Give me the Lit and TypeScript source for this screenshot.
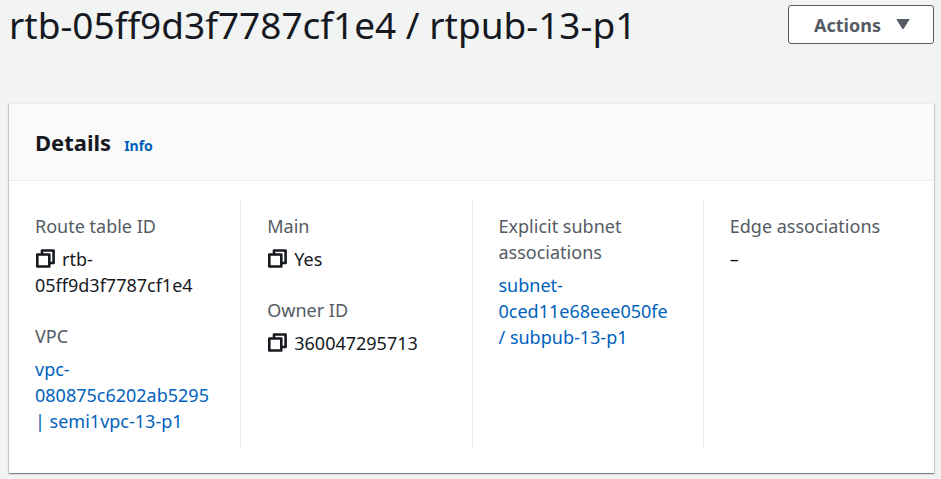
import { LitElement, html, css, svg, nothing } from "lit";
import { customElement, property } from "lit/decorators.js";

interface Field {
  label: string;
  value: string;
  copy?: boolean;
  link?: boolean;
}

const columns: Field[][] = [
  [
    { label: "Route table ID", value: "rtb-05ff9d3f7787cf1e4", copy: true },
    { label: "VPC", value: "vpc-080875c6202ab5295 | semi1vpc-13-p1", link: true },
  ],
  [
    { label: "Main", value: "Yes", copy: true },
    { label: "Owner ID", value: "360047295713", copy: true },
  ],
  [
    {
      label: "Explicit subnet associations",
      value: "subnet-0ced11e68eee050fe / subpub-13-p1",
      link: true,
    },
  ],
  [{ label: "Edge associations", value: "–" }],
];

const copyIcon = html`<svg viewBox="0 0 20 20" width="20" height="20" aria-hidden="true">
  ${svg`<path d="M7 5.3V1.5h11.6V14h-4.2M2.3 5.5h12v12h-12z" fill="none" stroke="#16191f" stroke-width="2.6" stroke-linejoin="round" />`}
</svg>`;

@customElement("detail-field")
export class DetailField extends LitElement {
  @property({ attribute: false }) field!: Field;

  static styles = css`
    :host {
      display: block;
    }
    .list {
      margin: 0;
    }
    .label {
      color: #545b64;
      margin-bottom: 7px;
    }
    .value {
      margin: 0;
      color: #16191f;
    }
    .link {
      color: #0062bd;
      text-decoration: none;
    }
    .copy {
      display: inline-block;
      width: 20px;
      height: 20px;
      margin: 0 7px 0 0;
      padding: 0;
      border: 0;
      background: none;
      vertical-align: -3px;
      line-height: 0;
      cursor: pointer;
    }
  `;

  render() {
    const { label, value, copy, link } = this.field;
    return html`<dl class="list">
      <dt class="label">${label}</dt>
      <dd class="value">${copy
        ? html`<button class="copy" type="button" aria-label="Copy ${label}">${copyIcon}</button>`
        : nothing}${link ? html`<a class="link" href="#">${value}</a>` : value}</dd>
    </dl>`;
  }
}

@customElement("app-root")
export class AppRoot extends LitElement {
  static styles = css`
    :host {
      display: block;
      box-sizing: border-box;
      min-height: 100vh;
      padding: 5px 7px 5px 9px;
      background: #f2f3f3;
      color: #16191f;
      font: 18px/26px "Noto Sans", "Open Sans", sans-serif;
    }
    .top {
      display: flex;
      justify-content: space-between;
      align-items: flex-start;
      margin-bottom: 58px;
    }
    .title {
      margin: 0;
      font-size: 37px;
      line-height: 40px;
      font-weight: 400;
    }
    .actions {
      display: flex;
      align-items: center;
      gap: 15px;
      height: 39px;
      padding: 0 23px 0 25px;
      border: 1px solid #545b64;
      border-radius: 3px;
      background: #fff;
      color: #545b64;
      font: 700 18px/26px "Noto Sans", "Open Sans", sans-serif;
      cursor: pointer;
    }
    .card {
      background: #fff;
      border-top: 1px solid #eaeded;
      box-shadow: 0 1px 1px 0 rgba(0, 28, 36, 0.3), 1px 1px 1px 0 rgba(0, 28, 36, 0.15),
        -1px 1px 1px 0 rgba(0, 28, 36, 0.15);
    }
    .head {
      display: flex;
      align-items: baseline;
      gap: 13px;
      padding: 23px 26px 21px;
      background: #fafafa;
      border-bottom: 1px solid #eaeded;
    }
    .heading {
      margin: 0;
      font-size: 22px;
      line-height: 30px;
      font-weight: 700;
    }
    .info {
      color: #0062bd;
      font-size: 14px;
      font-weight: 700;
      text-decoration: none;
    }
    .columns {
      display: grid;
      grid-template-columns: repeat(4, minmax(0, 1fr));
      padding: 19px 0 26px;
    }
    .column {
      display: flex;
      flex-direction: column;
      gap: 25px;
      padding: 13px 26px;
    }
    .column + .column {
      border-left: 1px solid #eaeded;
    }
  `;

  render() {
    return html`
      <header class="top">
        <h1 class="title">rtb-05ff9d3f7787cf1e4 / rtpub-13-p1</h1>
        <button class="actions" type="button">
          Actions
          <svg viewBox="0 0 14 11" width="14" height="11" aria-hidden="true">
            <path d="M1 .5h12L7 10z" fill="#545b64" stroke="#545b64" stroke-linejoin="round" />
          </svg>
        </button>
      </header>
      <section class="card">
        <div class="head">
          <h2 class="heading">Details</h2>
          <a class="info" href="#">Info</a>
        </div>
        <div class="columns">
          ${columns.map(
            (fields) => html`<div class="column">
              ${fields.map((field) => html`<detail-field .field=${field}></detail-field>`)}
            </div>`
          )}
        </div>
      </section>
    `;
  }
}
